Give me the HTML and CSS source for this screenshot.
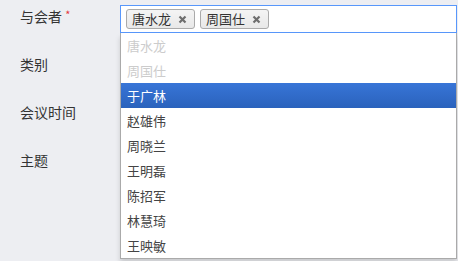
FILE: index.html
```html
<!DOCTYPE html>
<html>
<head>
  <title>会议</title>
  <link rel="stylesheet" href="styles.css">
</head>
<body>
  <form class="meeting-form">
    <div class="form-row">
      <label class="row-label">与会者 <span class="required">*</span></label>
      <div class="chosen">
        <ul class="chosen-choices">
          <li class="search-choice"><span>唐水龙</span><a class="choice-close"><svg width="9" height="9" viewBox="0 0 9 9"><path d="M1.5 1.5L7.5 7.5M7.5 1.5L1.5 7.5" stroke="#6e6e6e" stroke-width="2.2"/></svg></a></li>
          <li class="search-choice"><span>周国仕</span><a class="choice-close"><svg width="9" height="9" viewBox="0 0 9 9"><path d="M1.5 1.5L7.5 7.5M7.5 1.5L1.5 7.5" stroke="#6e6e6e" stroke-width="2.2"/></svg></a></li>
        </ul>
        <ul class="chosen-drop">
          <li class="result disabled">唐水龙</li>
          <li class="result disabled">周国仕</li>
          <li class="result highlighted">于广林</li>
          <li class="result">赵雄伟</li>
          <li class="result">周晓兰</li>
          <li class="result">王明磊</li>
          <li class="result">陈招军</li>
          <li class="result">林慧琦</li>
          <li class="result">王映敏</li>
        </ul>
      </div>
    </div>
    <div class="form-row">
      <label class="row-label">类别</label>
    </div>
    <div class="form-row">
      <label class="row-label">会议时间</label>
    </div>
    <div class="form-row">
      <label class="row-label">主题</label>
    </div>
  </form>
</body>
</html>
```

FILE: styles.css
```css
html {
  background-color: #edeef2;
}

body {
  margin: 0;
  min-height: 261px;
  background-color: #edeef2;
  font-family: "Noto Sans CJK SC", "Noto Sans", sans-serif;
  color: #333;
}

.meeting-form {
  padding-top: 5px;
}

.form-row {
  display: flex;
  height: 48px;
}

.row-label {
  width: 100px;
  padding-left: 20px;
  font-size: 14px;
  line-height: 22px;
}

.required {
  color: #e4393c;
  font-size: 11px;
  vertical-align: top;
  line-height: 18px;
}

.chosen {
  position: relative;
  width: 337px;
}

.chosen-choices {
  list-style: none;
  margin: 0;
  padding: 0 0 0 5px;
  height: 28px;
  box-sizing: border-box;
  border: 1px solid #5897fb;
  background: #fff;
  display: flex;
  align-items: center;
  gap: 5px;
}

.search-choice {
  display: flex;
  align-items: center;
  height: 20px;
  box-sizing: border-box;
  padding: 0 7px 0 5px;
  border: 1px solid #aaa;
  border-radius: 3px;
  background: linear-gradient(#f4f4f4, #e8e8e8);
  font-size: 13px;
  color: #333;
  line-height: 18px;
}

.choice-close {
  display: flex;
  margin-left: 7px;
}

.chosen-drop {
  position: absolute;
  top: 28px;
  left: 0;
  right: 0;
  margin: 0;
  padding: 0;
  list-style: none;
  background: #fff;
  border: 1px solid #aaa;
  border-top: 0;
  box-shadow: 0 4px 5px rgba(0, 0, 0, 0.15);
}

.result {
  height: 25px;
  line-height: 25px;
  padding-left: 6px;
  font-size: 13px;
  color: #444;
}

.result.disabled {
  color: #ccc;
}

.result.highlighted {
  background: linear-gradient(#3875d7, #2a62bc);
  color: #fff;
}
```
